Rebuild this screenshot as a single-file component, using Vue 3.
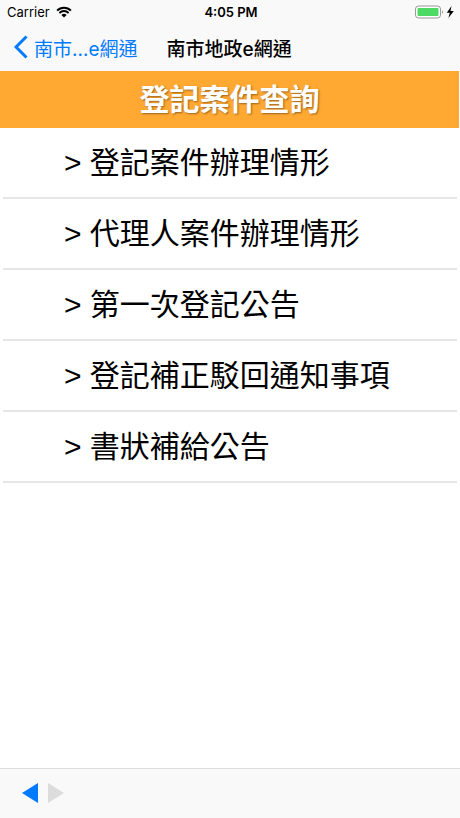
<!-- CaseQuery.vue -->
<template>
  <div class="screen">
    <header class="top">
      <div class="status-bar">
        <div class="carrier">
          <span>Carrier</span>
          <svg class="wifi" width="16" height="12" viewBox="0 0 16 12" aria-hidden="true">
            <path d="M1.1 4.6a9.8 9.8 0 0 1 13.8 0" />
            <path d="M3.4 7a6.5 6.5 0 0 1 9.2 0" />
            <path class="dot" d="M8 11.6 5.4 9a3.7 3.7 0 0 1 5.2 0z" />
          </svg>
        </div>
        <span class="time">4:05 PM</span>
        <div class="battery">
          <svg width="40" height="14" viewBox="0 0 40 14" aria-hidden="true">
            <rect x="0.5" y="1" width="25" height="12" rx="3" fill="#fff" stroke="#999" />
            <rect x="2.5" y="3" width="21" height="8" rx="1" fill="#4cd964" />
            <path d="M27 5.2c1.4.6 1.4 3 0 3.6z" fill="#999" />
            <path d="M36.5 1 31.8 7.8h3L33.4 13l5.4-7h-3.3z" fill="#000" />
          </svg>
        </div>
      </div>
      <nav class="nav-bar">
        <button type="button" class="back-btn" @click="goBack">
          <svg width="14" height="24" viewBox="0 0 14 24" aria-hidden="true">
            <path d="M12.5 1.5 2 12l10.5 10.5" />
          </svg>
          <span>南市…e網通</span>
        </button>
        <span class="title">南市地政e網通</span>
      </nav>
    </header>

    <main class="content">
      <h1 class="banner">登記案件查詢</h1>
      <ul class="menu">
        <li v-for="item in items" :key="item">
          <a href="#">&gt; {{ item }}</a>
        </li>
      </ul>
    </main>

    <footer class="toolbar">
      <button type="button" class="page-btn" aria-label="上一頁" @click="goBack">
        <svg width="16" height="20" viewBox="0 0 16 20"><path d="M16 0v20L0 10z" /></svg>
      </button>
      <button type="button" class="page-btn" aria-label="下一頁" disabled>
        <svg width="16" height="20" viewBox="0 0 16 20"><path d="M0 0v20l16-10z" /></svg>
      </button>
    </footer>
  </div>
</template>

<script setup>
const items = [
  '登記案件辦理情形',
  '代理人案件辦理情形',
  '第一次登記公告',
  '登記補正駁回通知事項',
  '書狀補給公告'
]

function goBack() {
  window.history.back()
}
</script>

<style>
body {
  margin: 0;
  background-color: #fff;
}
</style>

<style scoped>
.screen {
  display: flex;
  flex-direction: column;
  min-height: 100vh;
  color: #000;
  font-family: 'Liberation Sans', 'Noto Sans CJK TC', sans-serif;
}

.top {
  background-color: #f9f9f9;
  font-family: Inter, 'Noto Sans CJK TC', sans-serif;
}

.status-bar {
  display: grid;
  grid-template-columns: 1fr auto 1fr;
  align-items: center;
  height: 23px;
  padding: 0 5px 0 7px;
  font-size: 13px;
}

.carrier {
  display: flex;
  align-items: center;
  gap: 6px;
}

.wifi {
  fill: none;
  stroke: #000;
  stroke-width: 2;
}

.wifi .dot {
  fill: #000;
  stroke: none;
}

.time {
  font-weight: 600;
}

.battery {
  display: flex;
  justify-content: flex-end;
}

.nav-bar {
  display: flex;
  align-items: center;
  gap: 29px;
  height: 48px;
  padding: 0 14px;
  font-size: 19px;
}

.back-btn {
  display: flex;
  align-items: center;
  gap: 6px;
  padding: 0;
  border: none;
  background: none;
  color: #007aff;
  font: inherit;
  cursor: pointer;
}

.back-btn svg {
  fill: none;
  stroke: #007aff;
  stroke-width: 3;
}

.title {
  font-weight: 500;
}

.content {
  flex: 1;
}

.banner {
  margin: 0 1px 0 0;
  background-color: #ffa933;
  color: #fff;
  font-size: 30px;
  font-weight: bold;
  line-height: 57px;
  text-align: center;
  text-shadow: 1px 1px 2px rgba(0, 0, 0, 0.4);
}

.menu {
  margin: 0 3px;
  padding: 0;
  list-style: none;
}

.menu li {
  border-bottom: 2px solid #e6e6e6;
}

.menu a {
  display: block;
  padding-left: 61px;
  color: #000;
  font-size: 30px;
  line-height: 69px;
  text-decoration: none;
}

.toolbar {
  display: flex;
  align-items: center;
  gap: 10px;
  height: 47px;
  padding: 0 22px 2px;
  border-top: 1px solid #dcdcdc;
  background-color: #f9f9f9;
}

.page-btn {
  display: flex;
  padding: 0;
  border: none;
  background: none;
  color: #007aff;
  cursor: pointer;
}

.page-btn:disabled {
  color: #dcdcdc;
  cursor: default;
}

.page-btn path {
  fill: currentColor;
}
</style>
